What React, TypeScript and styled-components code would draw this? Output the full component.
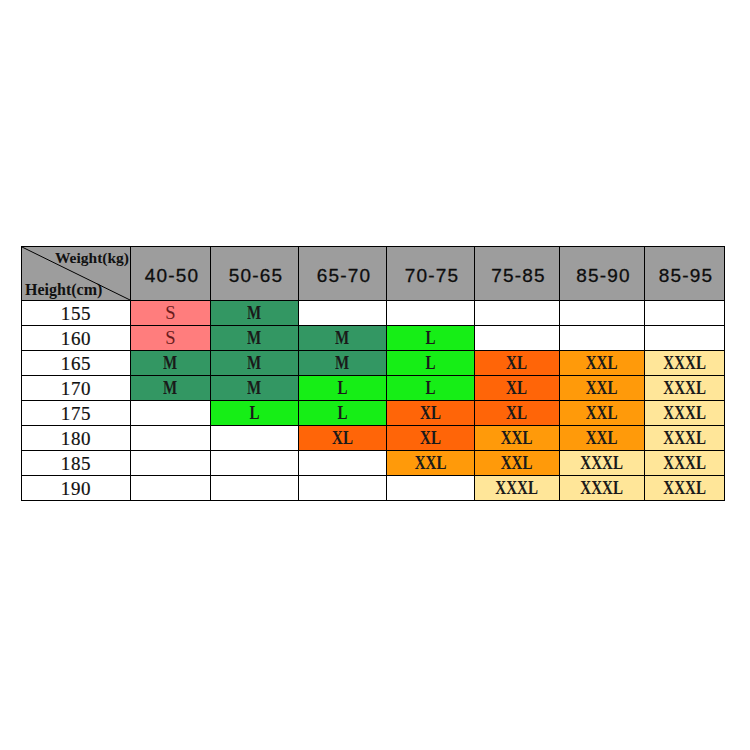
import React from "react";
import styled, { createGlobalStyle } from "styled-components";

const Global = createGlobalStyle`
  html, body { margin: 0; padding: 0; background: #ffffff; }
  #root { width: 750px; height: 750px; }
`;

const Page = styled.div`
  width: 750px;
  height: 750px;
  box-sizing: border-box;
  padding: 246px 0 0 21px;
  background: #ffffff;
`;

const Table = styled.table`
  border-collapse: collapse;
  table-layout: fixed;
  width: 703px;
  border: 1px solid #000;
`;

const HeadRow = styled.tr`
  height: 54px;
`;

const BodyRow = styled.tr`
  height: 25px;
`;

const HeadCell = styled.th`
  padding: 4px 0 0 3px;
  background: #9d9d9d;
  border: 1px solid #000;
  font-family: "Liberation Sans", Arial, sans-serif;
  font-weight: normal;
  font-size: 19px;
  letter-spacing: 1.2px;
  color: #0d0d0d;
  text-align: center;
  vertical-align: middle;
  -webkit-text-stroke: 0.3px #0d0d0d;
`;

const CornerCell = styled.th`
  padding: 0;
  background: #9d9d9d;
  border: 1px solid #000;
`;

const CornerInner = styled.div`
  position: relative;
  height: 53px;
  display: flex;
  flex-direction: column;
  justify-content: space-between;
  font-family: "Liberation Serif", "Times New Roman", serif;
  font-weight: bold;
  font-size: 15.5px;
  color: #111;
`;

const Diagonal = styled.svg`
  position: absolute;
  left: 0;
  top: 0;
  width: 100%;
  height: 100%;
`;

const WeightLabel = styled.span`
  align-self: flex-end;
  margin: 2px 1px 0 0;
  line-height: 17px;
`;

const HeightLabel = styled.span`
  align-self: flex-start;
  margin: 0 0 2px 3px;
  line-height: 17px;
  font-size: 16px;
`;

const RowLabel = styled.td`
  padding: 1px 0 0;
  border: 1px solid #000;
  background: #fff;
  font-family: "Liberation Serif", "Times New Roman", serif;
  font-size: 19px;
  letter-spacing: 0.6px;
  color: #111;
  text-align: center;
  vertical-align: middle;
  line-height: 20px;
  -webkit-text-stroke: 0.2px #111;
`;

const sizeColors: Record<string, string> = {
  S: "#ff7d7d",
  M: "#339763",
  L: "#16ee16",
  XL: "#ff6508",
  XXL: "#ff9a0a",
  XXXL: "#ffe699",
  "": "#ffffff",
};

const SizeCell = styled.td<{ $size: string }>`
  padding: 1px 0 0;
  border: 1px solid #000;
  background: ${(p) => sizeColors[p.$size]};
  text-align: center;
  vertical-align: middle;
  line-height: 20px;
`;

const SizeText = styled.span<{ $light: boolean }>`
  display: inline-block;
  font-family: "Liberation Serif", "Times New Roman", serif;
  font-size: 19.5px;
  font-weight: ${(p) => (p.$light ? "normal" : "bold")};
  color: ${(p) => (p.$light ? "#6a1c1c" : "#1a1a1a")};
  transform: scaleX(${(p) => (p.$light ? 0.95 : 0.77)});
  transform-origin: center;
`;

const weights = ["40-50", "50-65", "65-70", "70-75", "75-85", "85-90", "85-95"];
const colWidths = [109, 80, 88, 88, 88, 85, 85, 80];

const rows: [string, string[]][] = [
  ["155", ["S", "M", "", "", "", "", ""]],
  ["160", ["S", "M", "M", "L", "", "", ""]],
  ["165", ["M", "M", "M", "L", "XL", "XXL", "XXXL"]],
  ["170", ["M", "M", "L", "L", "XL", "XXL", "XXXL"]],
  ["175", ["", "L", "L", "XL", "XL", "XXL", "XXXL"]],
  ["180", ["", "", "XL", "XL", "XXL", "XXL", "XXXL"]],
  ["185", ["", "", "", "XXL", "XXL", "XXXL", "XXXL"]],
  ["190", ["", "", "", "", "XXXL", "XXXL", "XXXL"]],
];

export default function App() {
  return (
    <Page>
      <Global />
      <Table>
        <colgroup>
          {colWidths.map((w, i) => (
            <col key={i} style={{ width: w }} />
          ))}
        </colgroup>
        <thead>
          <HeadRow>
            <CornerCell>
              <CornerInner>
                <Diagonal viewBox="0 0 100 100" preserveAspectRatio="none">
                  <line x1="0" y1="0" x2="100" y2="100" stroke="#000" strokeWidth="1" vectorEffect="non-scaling-stroke" />
                </Diagonal>
                <WeightLabel>Weight(kg)</WeightLabel>
                <HeightLabel>Height(cm)</HeightLabel>
              </CornerInner>
            </CornerCell>
            {weights.map((w) => (
              <HeadCell key={w}>{w}</HeadCell>
            ))}
          </HeadRow>
        </thead>
        <tbody>
          {rows.map(([h, sizes]) => (
            <BodyRow key={h}>
              <RowLabel>{h}</RowLabel>
              {sizes.map((s, i) => (
                <SizeCell key={i} $size={s}>
                  {s && <SizeText $light={s === "S"}>{s}</SizeText>}
                </SizeCell>
              ))}
            </BodyRow>
          ))}
        </tbody>
      </Table>
    </Page>
  );
}
